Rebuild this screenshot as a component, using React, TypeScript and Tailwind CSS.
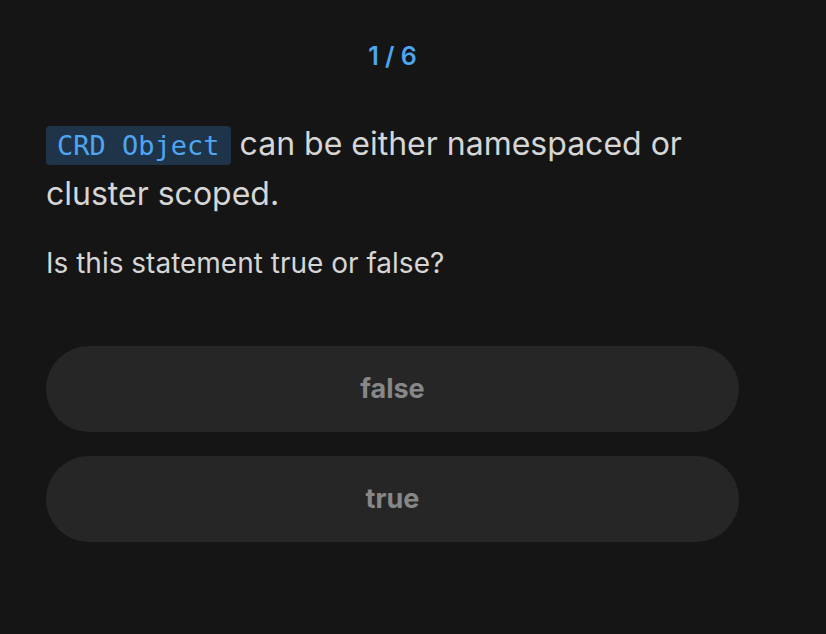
import React from "react";

export default function App() {
  return (
    <div
      className="min-h-[634px] w-full bg-[#151515] text-[#d4d4d4]"
      style={{ fontFamily: "Inter, 'Noto Sans', sans-serif" }}
    >
      <div className="ml-[46px] w-[693px] pt-[39px]">
        <div className="text-center text-[25px] font-semibold leading-[34px] text-[#4ea6f2]">
          1 / 6
        </div>
        <div className="mt-[47px] text-[32px] leading-[48px] text-[#d6d6d6]">
          <code
            className="rounded-[4px] bg-[#1f3448] px-[11px] py-[4px] text-[27px] text-[#4ea6f2]"
            style={{ fontFamily: "'DejaVu Sans Mono', monospace" }}
          >
            CRD Object
          </code>{" "}
          can be either namespaced or cluster scoped.
        </div>
        <div className="mt-[26px] text-[28px] leading-[38px] text-[#d6d6d6]">
          Is this statement true or false?
        </div>
        <div className="mt-[64px] flex flex-col gap-[24px]">
          <button className="h-[86px] w-full rounded-full bg-[#262626] text-[27px] font-bold text-[#878787]">
            false
          </button>
          <button className="h-[86px] w-full rounded-full bg-[#262626] text-[27px] font-bold text-[#878787]">
            true
          </button>
        </div>
      </div>
    </div>
  );
}
